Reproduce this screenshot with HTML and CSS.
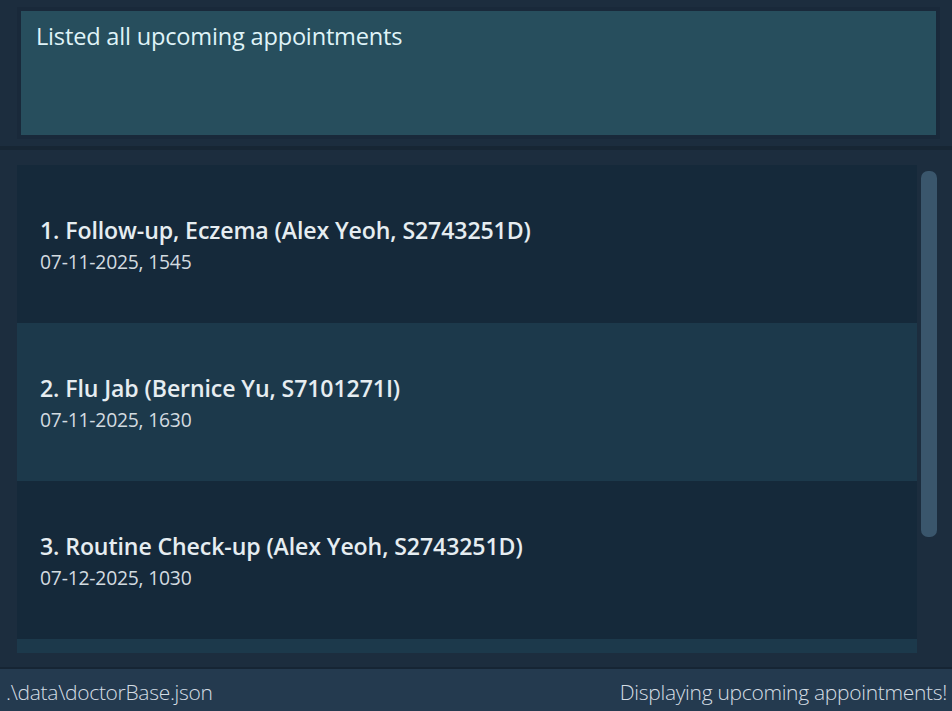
FILE: index.html
```html
<!DOCTYPE html>
<html>
<head>
<meta charset="utf-8">
<link rel="stylesheet" href="styles.css">
</head>
<body>
<div class="app">
  <section class="result-pane">
    <div class="result-box">Listed all upcoming appointments</div>
  </section>
  <section class="list-pane">
    <div class="list">
      <div class="cell odd">
        <div class="title">1. Follow-up, Eczema (Alex Yeoh, S2743251D)</div>
        <div class="date">07-11-2025, 1545</div>
      </div>
      <div class="cell even">
        <div class="title">2. Flu Jab (Bernice Yu, S7101271I)</div>
        <div class="date">07-11-2025, 1630</div>
      </div>
      <div class="cell odd">
        <div class="title">3. Routine Check-up (Alex Yeoh, S2743251D)</div>
        <div class="date">07-12-2025, 1030</div>
      </div>
      <div class="cell even partial"></div>
    </div>
    <div class="scroll-track"><div class="scroll-thumb"></div></div>
  </section>
  <footer class="status-bar">
    <span class="path">.\data\doctorBase.json</span>
    <span class="msg">Displaying upcoming appointments!</span>
  </footer>
</div>
</body>
</html>
```
FILE: styles.css
```css
html, body {
  margin: 0;
  padding: 0;
  background: #1c2d3e;
}
.app {
  width: 952px;
  height: 711px;
  display: flex;
  flex-direction: column;
  font-family: "Open Sans", "Noto Sans", sans-serif;
  overflow: hidden;
}
.result-pane {
  flex: 0 0 150px;
  height: 150px;
  box-sizing: border-box;
  padding: 7px 12px 7px 17px;
  border-bottom: 4px solid #172634;
  background: #1c2d3e;
}
.result-box {
  height: 100%;
  box-sizing: border-box;
  border: 4px solid #19293a;
  background: #274e5d;
  color: #dff3f8;
  font-size: 23.6px;
  font-weight: 400;
  padding: 9px 15px 7px;
  line-height: 32px;
  letter-spacing: -0.2px;
}
.list-pane {
  flex: 0 0 519px;
  height: 519px;
  box-sizing: border-box;
  display: flex;
  padding: 15px 15px 14px 17px;
  gap: 4px;
  border-bottom: 2px solid #162534;
  overflow: hidden;
}
.list {
  width: 900px;
  display: flex;
  flex-direction: column;
  overflow: hidden;
}
.cell {
  height: 158px;
  flex: 0 0 158px;
  box-sizing: border-box;
  display: flex;
  flex-direction: column;
  justify-content: center;
  padding: 2px 0 0 23px;
}
.cell.odd { background: #15293a; }
.cell.even { background: #1c394b; }
.title {
  color: #e6edf1;
  font-size: 23.1px;
  font-weight: 600;
  line-height: 32px;
  letter-spacing: -0.1px;
}
.date {
  color: #d3dbe0;
  font-size: 19.3px;
  line-height: 31px;
  letter-spacing: -0.2px;
}
.scroll-track {
  width: 16px;
  padding-top: 6px;
}
.scroll-thumb {
  height: 366px;
  background: #3a566c;
  border-radius: 7px;
}
.status-bar {
  height: 42px;
  flex: 0 0 42px;
  background: #243a4f;
  display: flex;
  justify-content: space-between;
  align-items: center;
  padding: 3px 5px 0 6px;
  box-sizing: border-box;
  color: #d4dde4;
  font-size: 21px;
  font-weight: 300;
  letter-spacing: -0.3px;
}
```
